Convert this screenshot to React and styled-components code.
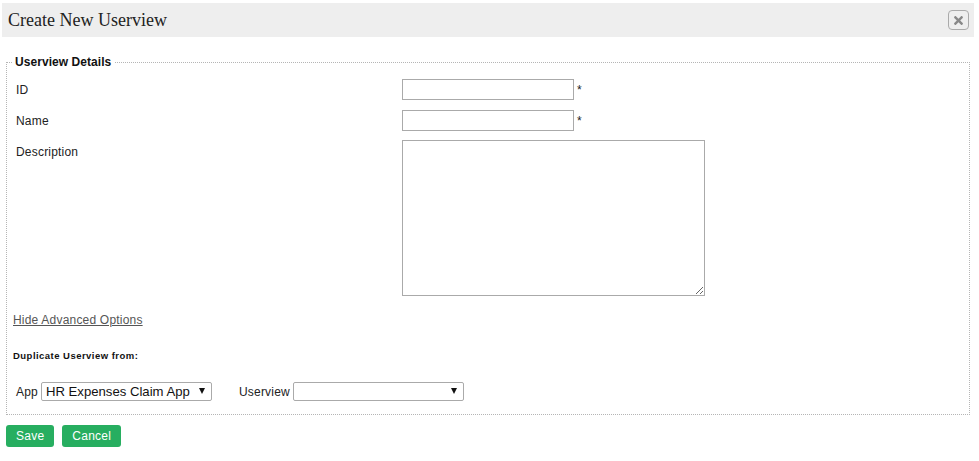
import React from 'react';
import styled, { createGlobalStyle } from 'styled-components';
import { FaTimes } from 'react-icons/fa';

const GlobalStyle = createGlobalStyle`
  html, body {
    margin: 0;
    padding: 0;
    background: #fff;
    color: #222;
    font-family: 'Liberation Sans', Arial, sans-serif;
    font-size: 12px;
  }
`;

const Page = styled.div`
  width: 979px;
  height: 461px;
  padding-top: 3px;
  box-sizing: border-box;
  overflow: hidden;
`;

const Header = styled.div`
  display: flex;
  align-items: center;
  justify-content: space-between;
  box-sizing: border-box;
  height: 34px;
  margin: 0 5px 0 2px;
  padding: 0 5px 0 6px;
  background: #eee;
`;

const Title = styled.h1`
  margin: 0;
  font-family: 'Liberation Serif', 'Times New Roman', serif;
  font-size: 18px;
  font-weight: normal;
  color: #222;
`;

const CloseButton = styled.button`
  display: flex;
  align-items: center;
  justify-content: center;
  box-sizing: border-box;
  width: 21px;
  height: 20px;
  padding: 0;
  border: 1px solid #aaa;
  border-radius: 4px;
  background: #eee;
  color: #888;
  font-size: 13px;
`;

const Details = styled.fieldset`
  box-sizing: border-box;
  width: 964px;
  height: 360px;
  margin: 18px 0 0 6px;
  padding: 10px 6px 0;
  border: 1px dotted #b5b5b5;
`;

const Legend = styled.legend`
  margin: 0;
  padding: 0 3px 0 2px;
  font-size: 12px;
  font-weight: bold;
  letter-spacing: 0.06px;
  color: #111;
`;

const Row = styled.div`
  display: grid;
  grid-template-columns: 389px auto auto;
  justify-content: start;
  margin-bottom: ${(p) => p.$gap || 10}px;
`;

const Label = styled.label`
  padding: ${(p) => p.$top || 4}px 0 0 3px;
  line-height: 14px;
  letter-spacing: 0.2px;
`;

const TextInput = styled.input`
  box-sizing: border-box;
  width: 172px;
  height: 21px;
  margin: 0;
  padding: 1px 2px;
  border: 1px solid #aaa;
  background: #fff;
`;

const Required = styled.span`
  padding: 4px 0 0 3px;
  line-height: 14px;
`;

const TextArea = styled.textarea`
  display: block;
  box-sizing: border-box;
  width: 303px;
  height: 156px;
  margin: 0;
  border: 1px solid #aaa;
  background: #fff;
`;

const ToggleLink = styled.a`
  display: block;
  margin-top: 16px;
  line-height: 16px;
  letter-spacing: 0.2px;
  color: #555;
  text-decoration: underline;
`;

const SectionTitle = styled.h4`
  margin: 22px 0 0;
  font-size: 9.5px;
  line-height: 12px;
  font-weight: bold;
  letter-spacing: 0.47px;
  color: #111;
`;

const PickerRow = styled.div`
  display: flex;
  align-items: center;
  margin-top: 20px;
  padding-left: 3px;
`;

const PickerLabel = styled.label`
  margin-left: ${(p) => p.$offset || 0}px;
  margin-right: ${(p) => p.$after}px;
  letter-spacing: 0.2px;
`;

const SelectBox = styled.div`
  position: relative;
  width: 171px;

  &::after {
    content: '';
    position: absolute;
    top: 6px;
    right: 7px;
    border-left: 3.5px solid transparent;
    border-right: 3.5px solid transparent;
    border-top: 6px solid #111;
    pointer-events: none;
  }
`;

const Select = styled.select`
  display: block;
  appearance: none;
  box-sizing: border-box;
  width: 100%;
  height: 19px;
  margin: 0;
  padding: 0 0 0 4px;
  border: 1px solid #aaa;
  border-radius: 2px;
  background: #fff;
  color: #111;
  font-family: 'Liberation Sans', Arial, sans-serif;
  font-size: 13.15px;
`;

const Actions = styled.div`
  display: flex;
  gap: 8px;
  margin: 10px 0 0 6px;
`;

const Button = styled.button`
  height: 22px;
  padding: 0 10px;
  border: 0;
  border-radius: 3px;
  background: #27ae60;
  color: #fff;
  font-family: 'Liberation Sans', Arial, sans-serif;
  font-size: 12px;
  letter-spacing: 0.25px;
`;

const App = () => {
  return (
    <Page>
      <GlobalStyle />
      <Header>
        <Title>Create New Userview</Title>
        <CloseButton aria-label="Close">
          <FaTimes />
        </CloseButton>
      </Header>
      <Details>
        <Legend>Userview Details</Legend>
        <Row>
          <Label>ID</Label>
          <TextInput />
          <Required>*</Required>
        </Row>
        <Row $gap={9}>
          <Label>Name</Label>
          <TextInput />
          <Required>*</Required>
        </Row>
        <Row>
          <Label $top={5}>Description</Label>
          <TextArea />
        </Row>
        <ToggleLink>Hide Advanced Options</ToggleLink>
        <SectionTitle>Duplicate Userview from:</SectionTitle>
        <PickerRow>
          <PickerLabel $after={3}>App</PickerLabel>
          <SelectBox>
            <Select defaultValue="hr">
              <option value="hr">HR Expenses Claim App</option>
            </Select>
          </SelectBox>
          <PickerLabel $offset={27} $after={3}>Userview</PickerLabel>
          <SelectBox>
            <Select defaultValue="">
              <option value=""></option>
            </Select>
          </SelectBox>
        </PickerRow>
      </Details>
      <Actions>
        <Button>Save</Button>
        <Button>Cancel</Button>
      </Actions>
    </Page>
  );
};

export default App;
